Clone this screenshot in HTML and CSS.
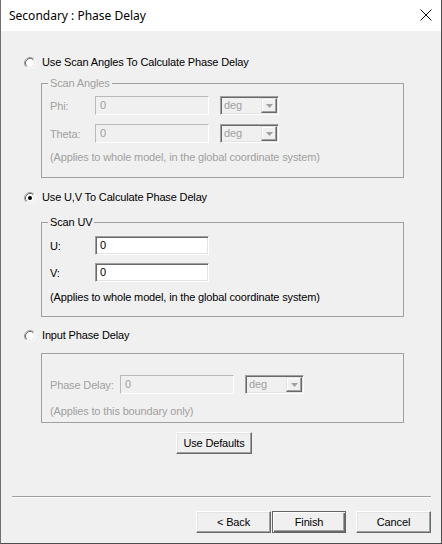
FILE: index.html
```html
<!DOCTYPE html>
<html>
<head>
<meta charset="utf-8">
<link rel="stylesheet" href="styles.css">
</head>
<body>
<div class="window">
  <div class="titlebar">
    <span class="title">Secondary : Phase Delay</span>
    <svg class="close" width="12" height="12" viewBox="0 0 12 12"><path d="M0.5 0.5L11.5 11.5M11.5 0.5L0.5 11.5" stroke="#111" stroke-width="1" fill="none"/></svg>
  </div>
  <div class="body">
    <div class="content">
      <div class="radio-row r1">
        <svg class="radio" width="12" height="12" viewBox="0 0 12 12"><circle cx="6" cy="6" r="4.5" fill="#fff"/><path d="M2.11 9.89A5.5 5.5 0 0 1 9.89 2.11" stroke="#a0a0a0" fill="none"/><path d="M2.82 9.18A4.5 4.5 0 0 1 9.18 2.82" stroke="#696969" fill="none"/><path d="M2.82 9.18A4.5 4.5 0 0 0 9.18 2.82" stroke="#e3e3e3" fill="none"/><path d="M2.11 9.89A5.5 5.5 0 0 0 9.89 2.11" stroke="#ffffff" fill="none"/></svg>
        <span>Use Scan Angles To Calculate Phase Delay</span>
      </div>
      <div class="group g1 disabled">
        <span class="legend">Scan Angles</span>
        <div class="field-row first">
          <span class="lbl">Phi:</span>
          <div class="edit">0</div>
          <div class="combo"><span>deg</span><span class="drop"><svg width="7" height="4" viewBox="0 0 7 4"><path d="M0 0H7L3.5 4Z" fill="#a0a0a0"/></svg></span></div>
        </div>
        <div class="field-row">
          <span class="lbl">Theta:</span>
          <div class="edit">0</div>
          <div class="combo"><span>deg</span><span class="drop"><svg width="7" height="4" viewBox="0 0 7 4"><path d="M0 0H7L3.5 4Z" fill="#a0a0a0"/></svg></span></div>
        </div>
        <div class="note">(Applies to whole model, in the global coordinate system)</div>
      </div>

      <div class="radio-row r2">
        <svg class="radio" width="12" height="12" viewBox="0 0 12 12"><circle cx="6" cy="6" r="4.5" fill="#fff"/><path d="M2.11 9.89A5.5 5.5 0 0 1 9.89 2.11" stroke="#a0a0a0" fill="none"/><path d="M2.82 9.18A4.5 4.5 0 0 1 9.18 2.82" stroke="#696969" fill="none"/><path d="M2.82 9.18A4.5 4.5 0 0 0 9.18 2.82" stroke="#e3e3e3" fill="none"/><path d="M2.11 9.89A5.5 5.5 0 0 0 9.89 2.11" stroke="#ffffff" fill="none"/><circle cx="6" cy="6" r="2" fill="#000"/></svg>
        <span>Use U,V To Calculate Phase Delay</span>
      </div>
      <div class="group g2">
        <span class="legend">Scan UV</span>
        <div class="field-row first">
          <span class="lbl">U:</span>
          <div class="edit">0</div>
        </div>
        <div class="field-row">
          <span class="lbl">V:</span>
          <div class="edit">0</div>
        </div>
        <div class="note">(Applies to whole model, in the global coordinate system)</div>
      </div>

      <div class="radio-row r3">
        <svg class="radio" width="12" height="12" viewBox="0 0 12 12"><circle cx="6" cy="6" r="4.5" fill="#fff"/><path d="M2.11 9.89A5.5 5.5 0 0 1 9.89 2.11" stroke="#a0a0a0" fill="none"/><path d="M2.82 9.18A4.5 4.5 0 0 1 9.18 2.82" stroke="#696969" fill="none"/><path d="M2.82 9.18A4.5 4.5 0 0 0 9.18 2.82" stroke="#e3e3e3" fill="none"/><path d="M2.11 9.89A5.5 5.5 0 0 0 9.89 2.11" stroke="#ffffff" fill="none"/></svg>
        <span>Input Phase Delay</span>
      </div>
      <div class="group g3 disabled">
        <div class="field-row">
          <span class="lbl wide">Phase Delay:</span>
          <div class="edit">0</div>
          <div class="combo"><span>deg</span><span class="drop"><svg width="7" height="4" viewBox="0 0 7 4"><path d="M0 0H7L3.5 4Z" fill="#a0a0a0"/></svg></span></div>
        </div>
        <div class="note">(Applies to this boundary only)</div>
      </div>

      <div class="defaults-row">
        <div class="btn defaults">Use Defaults</div>
      </div>
    </div>

    <div class="footer">
      <div class="separator"></div>
      <div class="buttons">
        <div class="btn back">&lt; Back</div>
        <div class="btn default finish">Finish</div>
        <div class="btn cancel">Cancel</div>
      </div>
    </div>
  </div>
</div>
</body>
</html>
```

FILE: styles.css
```css
html, body {
  margin: 0;
  padding: 0;
  background: #f0f0f0;
}

.window {
  width: 442px;
  height: 544px;
  box-sizing: border-box;
  border-left: 1px solid #707070;
  border-right: 1px solid #4d4d4d;
  border-bottom: 1px solid #4d4d4d;
  display: flex;
  flex-direction: column;
  font-family: "Liberation Sans", Arial, sans-serif;
  font-size: 11px;
  letter-spacing: -0.15px;
  color: #000;
}

.titlebar {
  height: 31px;
  background: #fff;
  display: flex;
  align-items: center;
  padding-left: 8px;
  flex: none;
}

.title {
  font-family: "Noto Sans", "Open Sans", sans-serif;
  font-size: 12px;
  letter-spacing: 0;
  color: #000;
  flex: 1;
  margin-top: -1px;
}

.close {
  margin-right: 9px;
  margin-top: -1px;
}

.body {
  flex: 1;
  display: flex;
  flex-direction: column;
  background: #f0f0f0;
}

.content {
  padding: 25px 0 0 23px;
}

.radio-row {
  display: flex;
  align-items: center;
  height: 13px;
  line-height: 13px;
}

.radio {
  flex: none;
  margin-right: 6px;
}

.r2 { margin-top: 13px; }
.r3 { margin-top: 12px; }

.group {
  margin-left: 17px;
  width: 363px;
  box-sizing: border-box;
  border: 1px solid #a0a0a0;
  padding: 0 0 0 8px;
}

.g1 { margin-top: 14px; height: 95px; }
.g2 { margin-top: 18px; height: 95px; }
.g3 { margin-top: 11px; height: 70px; padding-top: 12px; }

.legend {
  display: block;
  width: fit-content;
  margin: -7px 0 0 -2px;
  padding: 0 2px;
  line-height: 13px;
  background: #f0f0f0;
}

.disabled, .disabled .legend {
  color: #a0a0a0;
}

.field-row {
  display: flex;
  align-items: center;
  height: 19px;
  margin-top: 9px;
}

.field-row.first { margin-top: 6px; }
.g2 .field-row { margin-top: 8px; }
.g2 .field-row.first { margin-top: 7px; }

.lbl {
  width: 45px;
  flex: none;
}

.lbl.wide { width: 70px; }

.edit {
  width: 114px;
  height: 19px;
  box-sizing: border-box;
  border: 1px solid;
  border-color: #a0a0a0 #fff #fff #a0a0a0;
  box-shadow: inset 1px 1px #696969, inset -1px -1px #e3e3e3;
  background: #fff;
  padding: 2px 0 0 4px;
  line-height: 13px;
  color: #000;
}

.disabled .edit {
  background: #f0f0f0;
  color: #a0a0a0;
  border-color: #b9b9b9 #fff #fff #b9b9b9;
  box-shadow: inset 1px 1px #f0f0f0, inset -1px -1px #f0f0f0;
}

.combo {
  margin-left: 11px;
  width: 59px;
  height: 19px;
  box-sizing: border-box;
  border: 1px solid;
  border-color: #a0a0a0 #fff #fff #a0a0a0;
  box-shadow: inset 1px 1px #696969, inset -1px -1px #e3e3e3;
  display: flex;
  align-items: center;
  justify-content: space-between;
  padding: 0 1px 0 3px;
  line-height: 13px;
  color: #a0a0a0;
}

.drop {
  width: 16px;
  height: 15px;
  box-sizing: border-box;
  border: 1px solid;
  border-color: #e3e3e3 #696969 #696969 #e3e3e3;
  box-shadow: inset -1px -1px #a0a0a0, inset 1px 1px #fff;
  display: flex;
  align-items: center;
  justify-content: center;
}

.note {
  margin-top: 8px;
  line-height: 13px;
}

.g2 .note { margin-top: 9px; }
.g3 .note { margin-top: 11px; }

.defaults-row {
  margin-top: 9px;
  padding-left: 152px;
}

.btn {
  box-sizing: border-box;
  height: 22px;
  background: #f0f0f0;
  border: 1px solid;
  border-color: #fff #696969 #696969 #fff;
  box-shadow: inset -1px -1px #a0a0a0, inset 1px 1px #e3e3e3;
  display: flex;
  align-items: center;
  justify-content: center;
  line-height: 13px;
}

.defaults { width: 76px; }

.footer {
  margin-top: auto;
  padding: 0 10px 10px 11px;
}

.separator {
  height: 1px;
  background: #a0a0a0;
  border-bottom: 1px solid #fff;
}

.buttons {
  display: flex;
  justify-content: flex-end;
  margin-top: 13px;
}

.back { width: 75px; }
.finish { width: 74px; margin-left: 1px; }
.cancel { width: 75px; margin-left: 10px; }

.btn.default {
  border-color: #646464;
  box-shadow: inset 1px 1px #fff, inset -1px -1px #696969, inset -2px -2px #a0a0a0;
}
```
